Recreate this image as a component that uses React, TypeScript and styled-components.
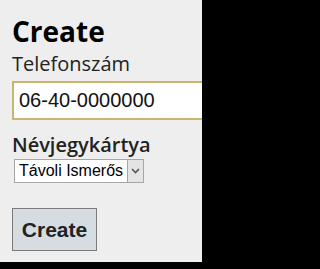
import React from 'react';
import styled, { createGlobalStyle } from 'styled-components';

const GlobalStyle = createGlobalStyle`
  html, body {
    margin: 0;
    padding: 0;
    background: #000;
  }
`;

const Page = styled.div`
  width: 202px;
  height: 262px;
  background: #eeeeee;
  overflow: hidden;
  padding: 14px 0 0 12px;
  box-sizing: border-box;
  font-family: 'Open Sans', 'Noto Sans', sans-serif;
`;

const Heading = styled.h1`
  margin: 0;
  font-size: 28px;
  line-height: 34px;
  font-weight: 700;
  color: #000;
`;

const Label = styled.label`
  display: block;
  font-size: 20px;
  line-height: 26px;
  color: #222;
  font-weight: ${(p: { $bold?: boolean }) => (p.$bold ? 600 : 400)};
`;

const Input = styled.input`
  display: block;
  box-sizing: border-box;
  width: 230px;
  height: 39px;
  margin: 4px 0 0;
  padding: 0 5px;
  border: 2px solid #c9b66c;
  background: #fff;
  font-family: 'Liberation Sans', Arial, sans-serif;
  font-size: 20px;
  color: #111;
  outline: none;
`;

const Field = styled.div`
  margin-top: ${(p: { $top: number }) => p.$top}px;
`;

const SelectBox = styled.div`
  display: inline-flex;
  align-items: stretch;
  margin: 1px 0 0 2px;
  height: 24px;
  box-sizing: border-box;
  border: 1px solid #a6a6a6;
  background: #fff;
  font-family: 'Liberation Sans', Arial, sans-serif;
  font-size: 16px;
  color: #000;
`;

const SelectText = styled.span`
  display: flex;
  align-items: center;
  padding: 0 4px;
`;

const SelectArrow = styled.span`
  display: flex;
  align-items: center;
  justify-content: center;
  width: 15px;
  background: #e4e4e4;
  border-left: 1px solid #a6a6a6;
`;

const Button = styled.button`
  display: block;
  margin-top: 25px;
  width: 85px;
  height: 43px;
  box-sizing: border-box;
  border: 1px solid #7a7a7a;
  background: #d5dde3;
  font-family: 'Liberation Sans', Arial, sans-serif;
  font-size: 21px;
  font-weight: 700;
  color: #222;
  padding: 0;
`;

export default function App() {
  return (
    <>
      <GlobalStyle />
      <Page>
        <Heading>Create</Heading>
        <Field $top={3}>
          <Label>Telefonszám</Label>
          <Input defaultValue="06-40-0000000" />
        </Field>
        <Field $top={12}>
          <Label $bold>Névjegykártya</Label>
          <SelectBox>
            <SelectText>Távoli Ismerős</SelectText>
            <SelectArrow>
              <svg width="9" height="6" viewBox="0 0 9 6">
                <path d="M1 1l3.5 3.5L8 1" fill="none" stroke="#555" strokeWidth="1.6" />
              </svg>
            </SelectArrow>
          </SelectBox>
        </Field>
        <Button>Create</Button>
      </Page>
    </>
  );
}
